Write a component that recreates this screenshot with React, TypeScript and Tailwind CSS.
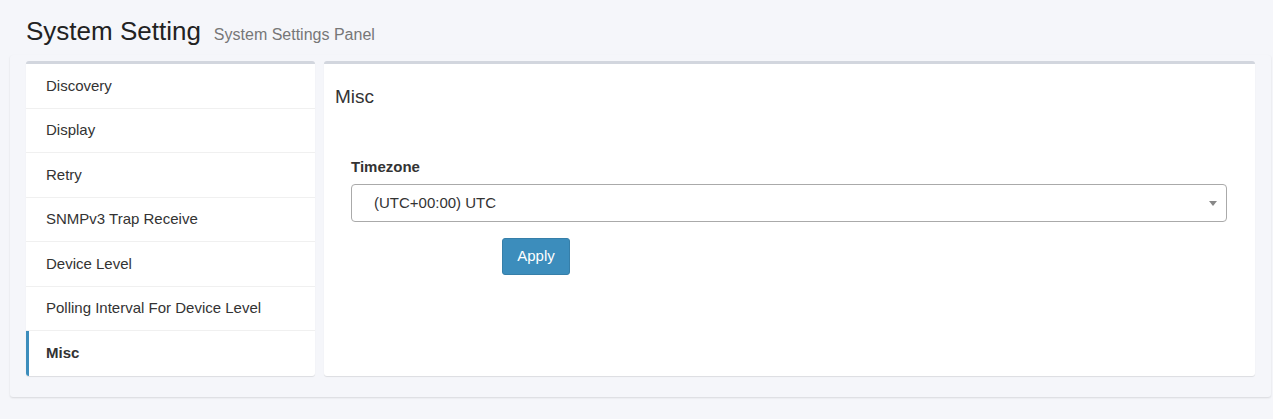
import { useState } from 'react';

const sections = [
    'Discovery',
    'Display',
    'Retry',
    'SNMPv3 Trap Receive',
    'Device Level',
    'Polling Interval For Device Level',
    'Misc',
];

export default function App() {
    const [active, setActive] = useState('Misc');
    const [timezone, setTimezone] = useState('UTC');

    return (
        <div className="min-h-screen bg-[#f5f6fa] font-['Liberation_Sans',Arial,sans-serif] text-[#333]">
            {/* Page header */}
            <div className="flex items-baseline px-[26px] pt-[14px] pb-[6px]">
                <h1 className="text-[26px] leading-[34px] text-[#222]">System Setting</h1>
                <span className="ml-[13px] text-[16px] text-[#777]">System Settings Panel</span>
            </div>

            <div className="ml-[10px] mr-[2px] mt-[1px] rounded-[3px] bg-[#f5f6fa] px-[16px] pt-[6px] pb-[21px] shadow-[0_1px_2px_rgba(0,0,0,0.12)]">
                <div className="flex gap-[9px]">
                    {/* Section list */}
                    <div className="w-[289px] shrink-0 overflow-hidden rounded-[3px] border-t-[3px] border-[#d2d6de] bg-white shadow-[0_1px_1px_rgba(0,0,0,0.1)]">
                        {sections.map((s, i) => (
                            <div
                                key={s}
                                onClick={() => setActive(s)}
                                className={
                                    'flex h-[44.5px] cursor-pointer items-center text-[15px] ' +
                                    (i < sections.length - 1 ? 'border-b border-[#f0f0f0] ' : '') +
                                    (active === s
                                        ? 'border-l-[3px] border-l-[#3c8dbc] pl-[17px] font-bold text-[#333]'
                                        : 'pl-[20px] text-[#333]')
                                }
                            >
                                {s}
                            </div>
                        ))}
                    </div>

                    {/* Misc settings */}
                    <div className="flex-1 rounded-[3px] border-t-[3px] border-[#d2d6de] bg-white shadow-[0_1px_1px_rgba(0,0,0,0.1)]">
                        <h3 className="px-[11px] pt-[22px] text-[19px] leading-[22px] text-[#333]">Misc</h3>
                        <div className="px-[27px] pt-[49px] pb-[20px] pr-[28px]">
                            <label className="block text-[15px] font-bold leading-[20px] text-[#333]">Timezone</label>
                            <div className="relative mt-[7px]">
                                <select
                                    value={timezone}
                                    onChange={(e) => setTimezone(e.target.value)}
                                    className="h-[38px] w-full appearance-none rounded-[4px] border border-[#aaa] bg-white pl-[22px] text-[15px] text-[#333] outline-none"
                                >
                                    <option value="UTC">(UTC+00:00) UTC</option>
                                    <option value="CET">(UTC+01:00) CET</option>
                                </select>
                                <svg className="pointer-events-none absolute right-[10px] top-[17px]" width="8" height="5" viewBox="0 0 8 5">
                                    <path d="M0 0h8L4 5z" fill="#888" />
                                </svg>
                            </div>
                            <button className="mt-[16px] ml-[151px] h-[37px] w-[68px] rounded-[3px] border border-[#367fa9] bg-[#3c8dbc] text-[15px] text-white">
                                Apply
                            </button>
                        </div>
                    </div>
                </div>
            </div>
        </div>
    );
}
